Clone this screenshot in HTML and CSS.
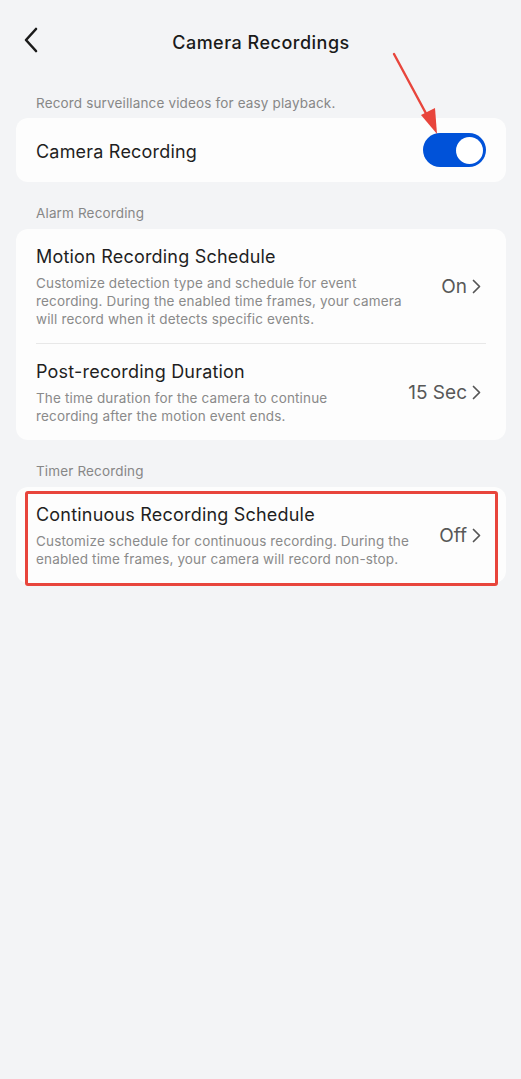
FILE: index.html
```html
<!DOCTYPE html>
<html lang="en">
<head>
<meta charset="utf-8">
<title>Camera Recordings</title>
<link rel="stylesheet" href="styles.css">
</head>
<body>
<div class="page">
  <header class="topbar">
    <button class="back" aria-label="Back">
      <svg width="16" height="26" viewBox="0 0 16 26"><path d="M13 2 L3 13 L13 24" fill="none" stroke="#1a1a1a" stroke-width="2.6" stroke-linecap="round" stroke-linejoin="round"/></svg>
    </button>
    <h1 class="title">Camera Recordings</h1>
  </header>

  <p class="section-label first">Record surveillance videos for easy playback.</p>
  <div class="card">
    <div class="row row-simple">
      <span class="row-title">Camera Recording</span>
      <span class="toggle on"><span class="knob"></span></span>
    </div>
  </div>

  <p class="section-label">Alarm Recording</p>
  <div class="card">
    <div class="row">
      <div class="row-text">
        <div class="row-title">Motion Recording Schedule</div>
        <div class="row-desc">Customize detection type and schedule for event recording. During the enabled time frames, your camera will record when it detects specific events.</div>
      </div>
      <div class="row-value">On<svg class="chev" width="9" height="15" viewBox="0 0 9 15"><path d="M1.5 1.5 L7.5 7.5 L1.5 13.5" fill="none" stroke="#555" stroke-width="1.7" stroke-linecap="round" stroke-linejoin="round"/></svg></div>
    </div>
    <div class="divider"></div>
    <div class="row">
      <div class="row-text">
        <div class="row-title">Post-recording Duration</div>
        <div class="row-desc">The time duration for the camera to continue recording after the motion event ends.</div>
      </div>
      <div class="row-value">15 Sec<svg class="chev" width="9" height="15" viewBox="0 0 9 15"><path d="M1.5 1.5 L7.5 7.5 L1.5 13.5" fill="none" stroke="#555" stroke-width="1.7" stroke-linecap="round" stroke-linejoin="round"/></svg></div>
    </div>
  </div>

  <p class="section-label">Timer Recording</p>
  <div class="card card-marked">
    <div class="row">
      <div class="row-text">
        <div class="row-title">Continuous Recording Schedule</div>
        <div class="row-desc">Customize schedule for continuous recording. During the enabled time frames, your camera will record non-stop.</div>
      </div>
      <div class="row-value">Off<svg class="chev" width="9" height="15" viewBox="0 0 9 15"><path d="M1.5 1.5 L7.5 7.5 L1.5 13.5" fill="none" stroke="#555" stroke-width="1.7" stroke-linecap="round" stroke-linejoin="round"/></svg></div>
    </div>
    <div class="highlight-box"></div>
  </div>

  <svg class="annot-arrow" width="60" height="90" viewBox="0 0 60 90">
    <line x1="3" y1="3" x2="38" y2="68" stroke="#e8453c" stroke-width="2.4" stroke-linecap="round"/>
    <polygon points="30,64 44,57 46,83" fill="#e8453c"/>
  </svg>
</div>
</body>
</html>
```

FILE: styles.css
```css
* { box-sizing: border-box; }
html, body {
  margin: 0;
  padding: 0;
  background: #f3f4f6;
}
body {
  font-family: "Inter", "Noto Sans", "Liberation Sans", sans-serif;
  color: #1f1f1f;
}
.page {
  position: relative;
  width: 521px;
  min-height: 1079px;
  padding: 0 15px 0 16px;
}
.topbar {
  position: relative;
  height: 84px;
  display: flex;
  align-items: center;
  justify-content: center;
}
.back {
  position: absolute;
  left: 7px;
  top: 27px;
  border: 0;
  background: none;
  padding: 0;
  width: 16px;
  height: 26px;
}
.back svg { display: block; }
.title {
  margin: 0;
  font-size: 18px;
  font-weight: 500;
  letter-spacing: 0.5px;
  color: #1a1a1a;
}
.section-label {
  margin: 23px 0 8px 20px;
  font-size: 13.5px;
  letter-spacing: 0.15px;
  line-height: 16px;
  color: #878787;
}
.section-label.first { margin-top: 11px; margin-bottom: 7px; }
.card {
  background: #fdfdfd;
  border-radius: 12px;
  padding: 0 20px;
}
.row {
  display: flex;
  align-items: center;
  gap: 24px;
  padding: 16px 0 15px;
}
.row-simple {
  height: 64px;
  padding: 3px 0 0;
  justify-content: space-between;
}
.row-text { flex: 1; min-width: 0; }
.row-title {
  font-size: 18px;
  letter-spacing: 0.2px;
  line-height: 24px;
  color: #1f1f1f;
}
.row-simple .toggle { margin-top: -3px; }
.row-desc {
  margin-top: 5px;
  font-size: 13.5px;
  letter-spacing: 0.15px;
  line-height: 18px;
  color: #8a8a8a;
}
.row-value {
  flex-shrink: 0;
  display: flex;
  align-items: center;
  gap: 5px;
  font-size: 19px;
  color: #585858;
  margin-top: 0;
  margin-right: 5px;
}
.chev { display: block; }
.divider {
  height: 1px;
  background: #e8e8e8;
}
.toggle {
  width: 63px;
  height: 34px;
  border-radius: 17px;
  background: #0052d9;
  display: flex;
  align-items: center;
  justify-content: flex-end;
  padding: 0 3.5px;
}
.knob {
  width: 27px;
  height: 27px;
  border-radius: 50%;
  background: #fff;
}
.card-marked { position: relative; }
.highlight-box {
  position: absolute;
  left: 9px;
  right: 8px;
  top: 4px;
  bottom: -3px;
  border: 3px solid #e8453c;
  border-radius: 3px;
  pointer-events: none;
}
.annot-arrow {
  position: absolute;
  left: 391px;
  top: 51px;
}
```
